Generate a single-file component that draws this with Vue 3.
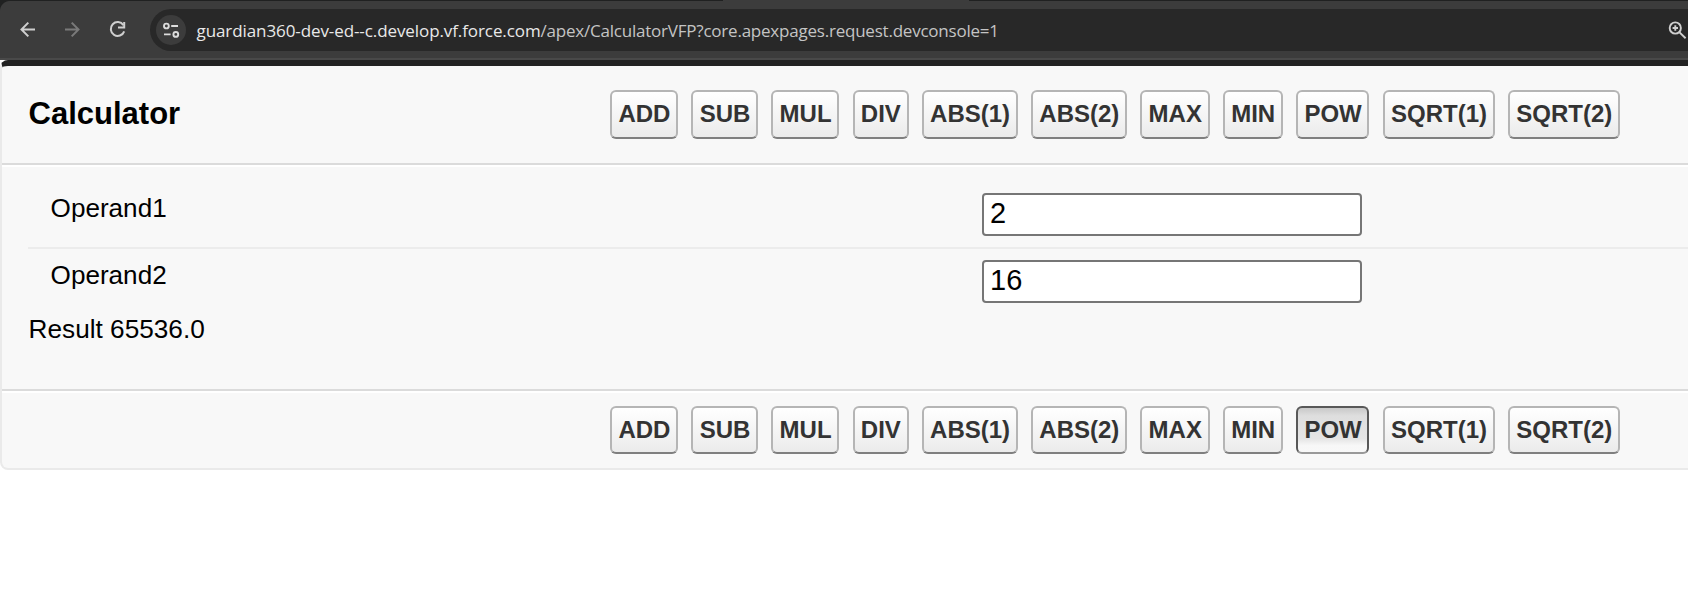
<script setup>
import { ref } from 'vue'

const operations = ['ADD', 'SUB', 'MUL', 'DIV', 'ABS(1)', 'ABS(2)', 'MAX', 'MIN', 'POW', 'SQRT(1)', 'SQRT(2)']
const active = ref('POW')
const operand1 = ref('2')
const operand2 = ref('16')
</script>

<template>
  <div class="window">
    <div class="tabstrip"><span class="tab"></span></div>
    <header class="toolbar">
      <svg class="nav-icons" width="150" height="57" viewBox="0 3 150 57" fill="none" stroke-width="2">
        <path d="M35 29.5H21.8M28.3 22.6L21.5 29.5L28.3 36.4" stroke="#cfcfcf" />
        <path d="M65 29.5H78.2M71.7 22.6L78.5 29.5L71.7 36.4" stroke="#7a7a7a" />
        <path d="M123.4 25.1A6.9 6.9 0 1 0 124.2 31.3" stroke="#cfcfcf" />
        <path d="M124.2 22V27.4H118" stroke="#cfcfcf" />
      </svg>
      <div class="address">
        <span class="site">
          <svg width="30" height="30" viewBox="0 0 30 30" fill="none" stroke="#dcdcdc" stroke-width="1.9">
            <circle cx="10.4" cy="11" r="2.4" />
            <path d="M15.2 11H22M8 19.4H14.6" />
            <circle cx="19.8" cy="19.4" r="2.4" />
          </svg>
        </span>
        <span class="url"><span class="host">guardian360-dev-ed--c.develop.vf.force.com</span><span class="path">/apex/CalculatorVFP?core.apexpages.request.devconsole=1</span></span>
        <svg class="zoom" width="20" height="20" viewBox="0 0 20 20" fill="none" stroke="#cfcfcf" stroke-width="1.9">
          <circle cx="7.3" cy="8" r="5.6" />
          <path d="M11.3 12.1L17.6 18.3M7.3 5.3V10.7M4.6 8H10" />
        </svg>
      </div>
    </header>
    <main class="block">
      <div class="block-head">
        <h2>Calculator</h2>
        <div class="buttons">
          <button v-for="op in operations" :key="op" type="button" @click="active = op">{{ op }}</button>
        </div>
      </div>
      <div class="block-body">
        <label class="row first"><span>Operand1</span><input v-model="operand1" type="text" /></label>
        <label class="row"><span>Operand2</span><input v-model="operand2" type="text" /></label>
        <div class="result">Result 65536.0</div>
      </div>
      <div class="block-foot">
        <div class="buttons">
          <button v-for="op in operations" :key="op" type="button" :class="{ pressed: op === active }" @click="active = op">{{ op }}</button>
        </div>
      </div>
    </main>
  </div>
</template>

<style>
body { margin: 0; background: #fff; }
</style>

<style scoped>
.window { height: 608px; overflow: hidden; font-family: "Liberation Sans", Arial, sans-serif; color: #000; }
.window * { box-sizing: border-box; }
.tabstrip { height: 1px; background: #202121; display: flex; }
.tab { width: 246px; margin-left: 723px; background: #3c3c3c; }
.toolbar { height: 59px; display: flex; background: radial-gradient(circle at 10px 10px, #3c3c3c 9.5px, #202121 10.5px) 0 0 / 10px 10px no-repeat, #3c3c3c; border-bottom: 2px solid #494949; }
.nav-icons { flex: none; margin-top: 2px; }
.address { flex: 1; height: 42px; margin-top: 8px; padding-left: 6px; display: flex; align-items: center; background: #282828; border-radius: 21px 0 0 21px; }
.site { width: 30px; height: 30px; border-radius: 50%; background: #3c3c3c; }
.site svg { display: block; }
.url { margin: 2px 0 0 10.5px; font: 17px/24px "Open Sans", sans-serif; letter-spacing: -0.22px; white-space: pre; color: #c4c4c4; }
.host { color: #e9e9e9; letter-spacing: -0.09px; }
.zoom { margin-left: auto; flex: none; }
.block { width: 1720px; height: 410px; background: #f8f8f8; border: 2px solid #eaeaea; border-top: 6px solid #222; border-radius: 8px; }
.block-head { height: 101px; padding-left: 26px; display: flex; align-items: flex-start; border-bottom: 2px solid #fff; box-shadow: inset 0 -2px #dbdbdb; }
h2 { width: 582.1px; margin: 30px 0 0; padding-left: 0.6px; font-size: 31px; line-height: 36px; }
.buttons { display: flex; gap: 13.27px; }
.block-head .buttons { margin-top: 24px; }
button { flex: none; height: 49px; padding: 0 5.7px 3px 6.3px; border: 2px solid #b5b5b5; border-bottom-color: #7f7f7f; border-radius: 6px; background: linear-gradient(#fff, #ebebeb); color: #333; font: bold 24px/27px "Liberation Sans", Arial, sans-serif; white-space: nowrap; font-kerning: none; }
.block-body { height: 222px; padding: 14px 0 0 26px; }
.row { display: grid; grid-template-columns: 932px 380px; padding-left: 22px; height: 66px; padding-top: 11px; font-size: 26.1px; line-height: 30px; }
.row.first { height: 68px; padding-top: 12px; border-bottom: 2px solid #ececec; }
.row > span { padding-left: 0.6px; }
input { width: 380px; height: 43px; padding: 0 5px 2px 6px; border: 2px solid #767676; border-radius: 4px; background: #fff; color: #000; font: 29px/33px "Liberation Sans", Arial, sans-serif; outline: none; }
.result { margin-top: -1px; padding-left: 0.6px; font-size: 26.2px; line-height: 30px; }
.block-foot { height: 81px; padding: 15px 0 0 608.1px; border-top: 2px solid #dbdbdb; box-shadow: inset 0 2px #fff; }
.block-foot button { height: 48px; padding-bottom: 2px; }
button.pressed { border-color: #585858 #585858 #999; background: linear-gradient(#c9c9c9 0, #dedede 18%, #e5e5e5 70%, #f7f7f7 85%, #f8f8f8); }
</style>
